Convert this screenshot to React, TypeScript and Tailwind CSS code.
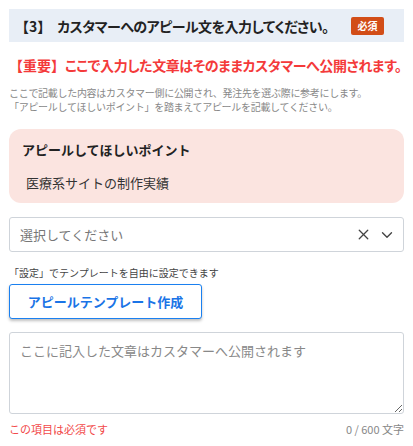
import { X, ChevronDown } from 'lucide-react';

const FONT = "font-['Noto_Sans_CJK_JP','Noto_Sans',sans-serif]";

export default function App() {
  return (
    <div className={`${FONT} w-[413px] h-[446px] bg-white px-[9px] pt-[9px] text-[#333]`}>
      <div className="flex h-[33px] items-center justify-between bg-[#e8eef6] pl-[6px] pr-[20px]">
        <h2 className="flex items-baseline text-[14px] font-bold leading-none text-[#222] [text-spacing-trim:space-all]">
          <span className="mr-[6px]">【3】</span>
          <span className="tracking-[-0.5px] [font-feature-settings:'palt']">カスタマーへのアピール文を入力してください。</span>
        </h2>
        <span className="flex h-[18px] w-[33px] items-center justify-center rounded-[2px] bg-[#d24d17] text-[10px] font-bold text-white">
          必須
        </span>
      </div>

      <p className="mt-[14px] flex items-baseline text-[14px] font-bold leading-[18px] text-[#f43a3a] [text-spacing-trim:space-all]">
        <span>【重要】</span>
        <span className="tracking-[-0.4px] [font-feature-settings:'palt']">ここで入力した文章はそのままカスタマーへ公開されます。</span>
      </p>

      <div className="mt-[12px] text-[10px] leading-[14px] tracking-[-0.3px] text-[#888] [text-spacing-trim:space-all]">
        <p>ここで記載した内容はカスタマー側に公開され、発注先を選ぶ際に参考にします。</p>
        <p>「アピールしてほしいポイント」を踏まえてアピールを記載してください。</p>
      </div>

      <div className="mt-[15px] h-[74px] rounded-[12px] bg-[#fbe4e0] px-[13px] pt-[12px]">
        <p className="text-[13px] font-bold leading-[18px] text-[#222]">アピールしてほしいポイント</p>
        <p className="mt-[15px] pl-[4px] text-[13px] leading-[18px] text-[#333]">医療系サイトの制作実績</p>
      </div>

      <div className="mt-[14px] flex h-[35px] items-center justify-between rounded-[3px] border border-[#cfd4da] pl-[10px] pr-[7px]">
        <span className="text-[13px] text-[#777]">選択してください</span>
        <div className="flex items-center gap-[6px] text-[#444]">
          <X size={17} strokeWidth={1.8} />
          <ChevronDown size={18} strokeWidth={1.8} />
        </div>
      </div>

      <p className="mt-[14px] text-[10px] leading-[14px] text-[#444]">「設定」でテンプレートを自由に設定できます</p>

      <button className="mt-[4px] flex h-[35px] w-[193px] items-center justify-center rounded-[3px] border border-[#1a80f0] bg-white text-[13px] font-bold text-[#1a74e6] shadow-[0_2px_3px_rgba(0,0,0,0.25)]">
        アピールテンプレート作成
      </button>

      <textarea
        className="mt-[13px] block h-[82px] w-full rounded-[3px] border border-[#cfd4da] px-[10px] py-[8px] text-[13px] leading-[20px] text-[#333] placeholder:text-[#888] outline-none"
        placeholder="ここに記入した文章はカスタマーへ公開されます"
      />

      <div className="mt-[7px] flex items-center justify-between text-[11px] leading-[16px]">
        <span className="text-[#f24a4a]">この項目は必須です</span>
        <span className="text-[#888]">0 / 600 文字</span>
      </div>
    </div>
  );
}
